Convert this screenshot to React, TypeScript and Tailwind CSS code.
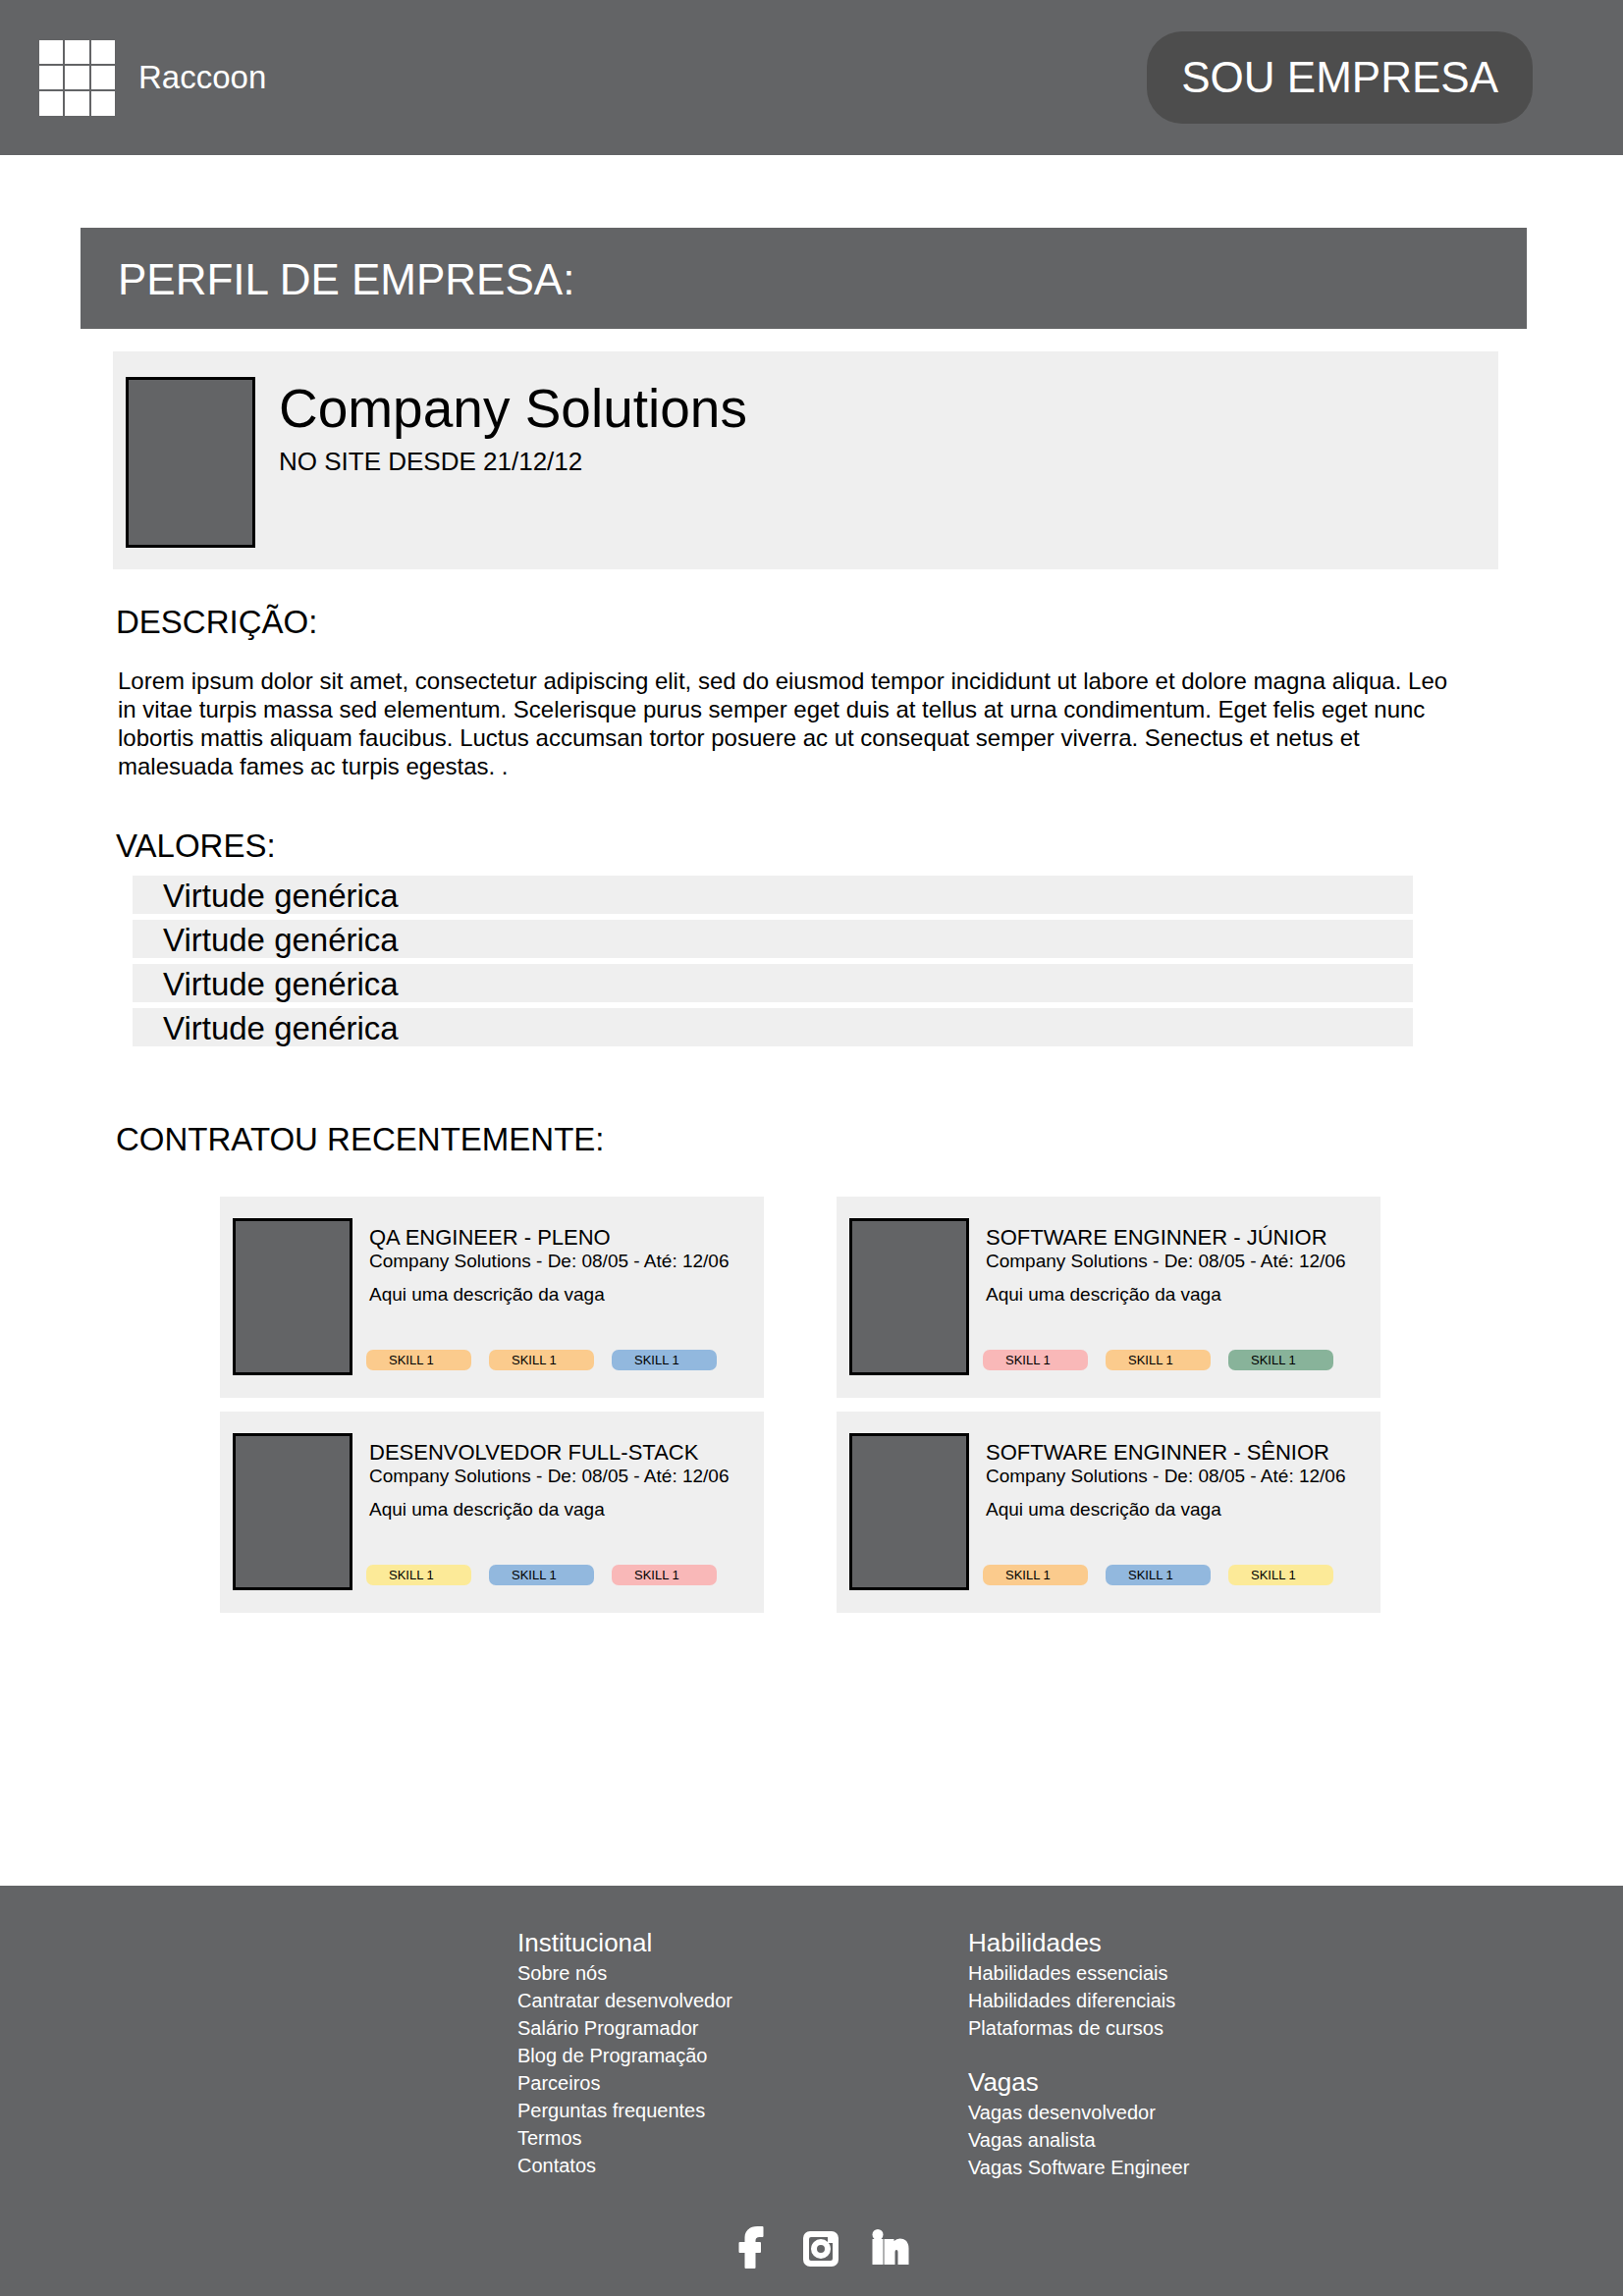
import React from "react";

type Job = { title: string; skills: string[] };

const ORANGE = "bg-[#fbcb8d]";
const BLUE = "bg-[#92b8de]";
const PINK = "bg-[#f9b8b8]";
const GREEN = "bg-[#88b39a]";
const YELLOW = "bg-[#fcea98]";

const jobs: Job[] = [
  { title: "QA ENGINEER - PLENO", skills: [ORANGE, ORANGE, BLUE] },
  { title: "SOFTWARE ENGINNER - JÚNIOR", skills: [PINK, ORANGE, GREEN] },
  { title: "DESENVOLVEDOR FULL-STACK", skills: [YELLOW, BLUE, PINK] },
  { title: "SOFTWARE ENGINNER - SÊNIOR", skills: [ORANGE, BLUE, YELLOW] },
];

const values = ["Virtude genérica", "Virtude genérica", "Virtude genérica", "Virtude genérica"];

function SectionTitle({ children, className = "" }: { children: React.ReactNode; className?: string }) {
  return <h2 className={`ml-9 text-[33px] leading-[40px] ${className}`}>{children}</h2>;
}

function JobCard({ job }: { job: Job }) {
  return (
    <article className="flex gap-[14px] bg-[#efefef] pt-[22px] pb-[23px] pl-[13px]">
      <div className="h-[160px] w-[122px] shrink-0 border-3 border-black bg-[#636466]" />
      <div className="flex flex-col pt-2 pb-[5px]">
        <h3 className="pl-[3px] text-[22px] leading-6 whitespace-nowrap">{job.title}</h3>
        <p className="pl-[3px] text-[19px] leading-6 whitespace-nowrap">
          Company Solutions - De: 08/05 - Até: 12/06
        </p>
        <p className="mt-[10px] pl-[3px] text-[19px] leading-6">Aqui uma descrição da vaga</p>
        <ul className="mt-auto flex gap-[18px]">
          {job.skills.map((color, i) => (
            <li key={i} className={`h-[21px] w-[107px] rounded-[7px] pl-[23px] text-[13px] leading-[21px] ${color}`}>
              SKILL 1
            </li>
          ))}
        </ul>
      </div>
    </article>
  );
}

function LinkGroup({ title, links, className = "" }: { title: string; links: string[]; className?: string }) {
  return (
    <section className={className}>
      <h3 className="mb-[3px] text-[26px] leading-7">{title}</h3>
      <ul className="text-xl leading-7">
        {links.map((l) => (
          <li key={l}>
            <a href="#">{l}</a>
          </li>
        ))}
      </ul>
    </section>
  );
}

export default function App() {
  return (
    <div className="bg-white font-['Liberation_Sans',Arial,sans-serif] text-black">
      <header className="flex h-[158px] items-center bg-[#636466] pr-[92px] pl-10 text-white">
        <div className="grid size-[77px] grid-cols-3 gap-[2px]">
          {Array.from({ length: 9 }, (_, i) => (
            <div key={i} className="bg-white" />
          ))}
        </div>
        <span className="ml-6 text-[33px] leading-10">Raccoon</span>
        <button className="ml-auto h-[94px] rounded-[36px] bg-[#4d4d4d] px-[35px] text-[44px] leading-none">
          SOU EMPRESA
        </button>
      </header>

      <main className="pt-[74px] pr-[98px] pb-[278px] pl-[82px]">
        <h1 className="bg-[#636466] pt-[27px] pb-[24px] pl-[38px] text-[44px] leading-[52px] text-white">
          PERFIL DE EMPRESA:
        </h1>

        <section className="mt-[23px] mr-[29px] ml-[33px] flex gap-6 bg-[#efefef] pt-[26px] pb-[22px] pl-[13px]">
          <div className="h-[174px] w-[132px] shrink-0 border-3 border-black bg-[#636466]" />
          <div>
            <h2 className="text-[55px] leading-[64px]">Company Solutions</h2>
            <p className="text-[26px] leading-[44px]">NO SITE DESDE 21/12/12</p>
          </div>
        </section>

        <SectionTitle className="mt-[34px]">DESCRIÇÃO:</SectionTitle>
        <p className="mt-[25px] mr-[65px] ml-[38px] text-2xl leading-[29px]">
          Lorem ipsum dolor sit amet, consectetur adipiscing elit, sed do eiusmod tempor incididunt ut labore et dolore
          magna aliqua. Leo in vitae turpis massa sed elementum. Scelerisque purus semper eget duis at tellus at urna
          condimentum. Eget felis eget nunc lobortis mattis aliquam faucibus. Luctus accumsan tortor posuere ac ut
          consequat semper viverra. Senectus et netus et malesuada fames ac turpis egestas. .
        </p>

        <SectionTitle className="mt-[47px]">VALORES:</SectionTitle>
        <ul className="mt-[10px] mr-[116px] ml-[53px] flex flex-col gap-[6px]">
          {values.map((v, i) => (
            <li key={i} className="bg-[#efefef] pt-[3px] pl-[31px] text-[33px] leading-9">
              {v}
            </li>
          ))}
        </ul>

        <SectionTitle className="mt-[75px]">CONTRATOU RECENTEMENTE:</SectionTitle>
        <div className="mt-[38px] mr-[149px] ml-[142px] grid grid-cols-2 gap-x-[74px] gap-y-[14px]">
          {jobs.map((j) => (
            <JobCard key={j.title} job={j} />
          ))}
        </div>
      </main>

      <footer className="bg-[#636466] pt-11 pb-[30px] text-white">
        <div className="grid grid-cols-[459px_1fr] pl-[527px]">
          <LinkGroup
            title="Institucional"
            links={[
              "Sobre nós",
              "Cantratar desenvolvedor",
              "Salário Programador",
              "Blog de Programação",
              "Parceiros",
              "Perguntas frequentes",
              "Termos",
              "Contatos",
            ]}
          />
          <div>
            <LinkGroup
              title="Habilidades"
              links={["Habilidades essenciais", "Habilidades diferenciais", "Plataformas de cursos"]}
            />
            <LinkGroup
              className="mt-[27px]"
              title="Vagas"
              links={["Vagas desenvolvedor", "Vagas analista", "Vagas Software Engineer"]}
            />
          </div>
        </div>
        <nav aria-label="Redes sociais" className="mt-[46px] flex justify-center gap-[33px] pl-[18px]">
          <a href="#" aria-label="Facebook">
            <svg className="block h-[43px] w-[38px]" viewBox="0 0 38 43" fill="currentColor">
              <path d="M12.500 42q0 1 1 1h9q1 0 1-1V27h4.500q1 0 1-1V17q0-1-1-1H23.500v-1.500q0-3.500 4-3.500h3q1 0 1-1V1q0-1-1-1h-5C17 0 12.500 5 12.500 11v5h-5q-1 0-1 1v9q0 1 1 1h5z" />
            </svg>
          </a>
          <a href="#" aria-label="Instagram">
            <svg className="block h-[43px] w-[38px]" viewBox="0 0 38 43" fill="currentColor">
              <path
                fillRule="evenodd"
                d="M8 5h22a7 7 0 0 1 7 7v22a7 7 0 0 1-7 7H8a7 7 0 0 1-7-7V12a7 7 0 0 1 7-7zM9 11q-2 0-2 2v20q0 2 2 2h20q2 0 2-2V17h-5v-6z"
              />
              <path
                fillRule="evenodd"
                d="M19 13a10 10 0 1 1 0 20a10 10 0 1 1 0-20zM19 19a4 4 0 1 0 0 8a4 4 0 1 0 0-8z"
              />
            </svg>
          </a>
          <a href="#" aria-label="LinkedIn">
            <svg className="block h-[43px] w-[38px]" viewBox="0 0 38 43" fill="currentColor">
              <circle cx="6" cy="8.500" r="5.500" />
              <path d="M0.500 13H11.500V39H0.500z" />
              <path d="M12.500 13h10v2q2.500-2.500 6-2.500c6 0 9 4 9 10V39h-11V26q0-2-1.500-2t-1.500 2V39H12.500z" />
            </svg>
          </a>
        </nav>
      </footer>
    </div>
  );
}
